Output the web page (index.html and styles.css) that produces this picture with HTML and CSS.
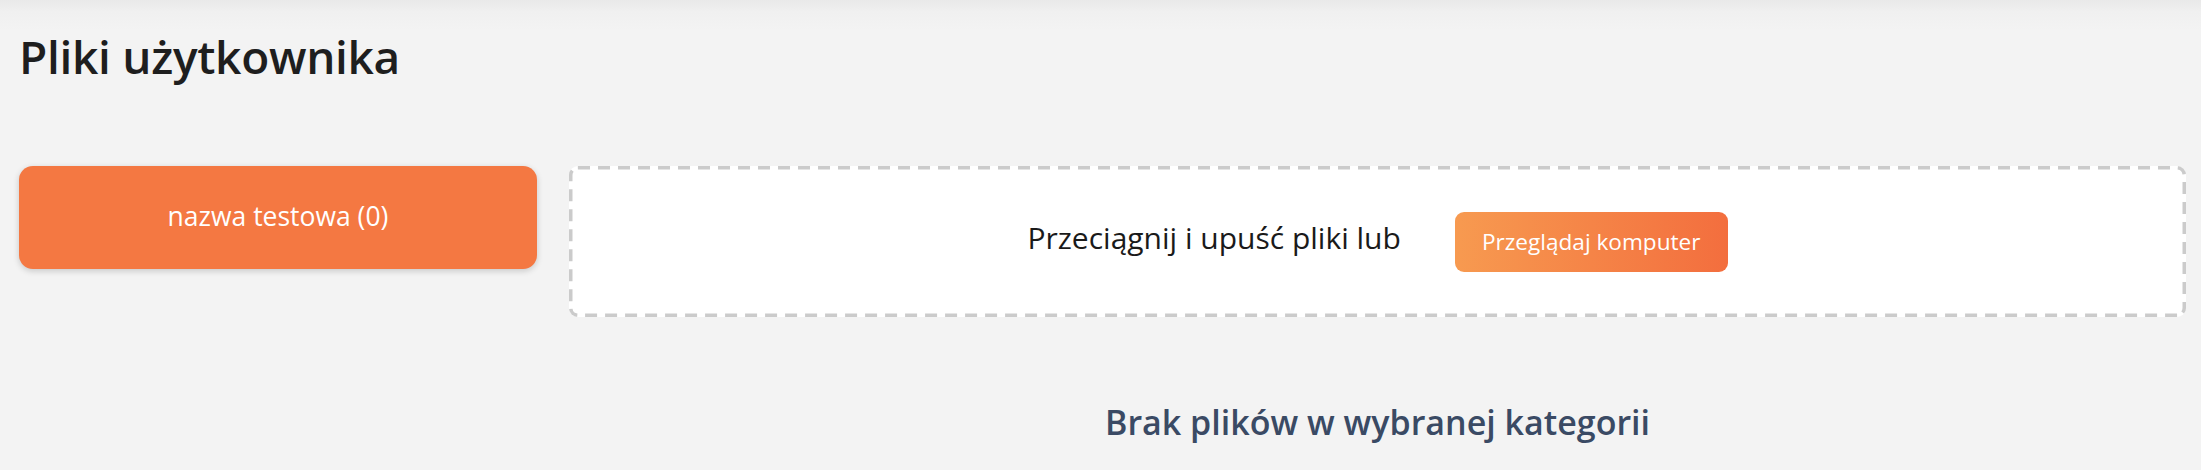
FILE: index.html
```html
<!DOCTYPE html>
<html lang="pl">
<head>
<meta charset="utf-8">
<title>Pliki użytkownika</title>
<link rel="stylesheet" href="styles.css">
</head>
<body>
<div class="topshade"></div>
<main class="page">
  <h1 class="title">Pliki użytkownika</h1>
  <div class="layout">
    <aside class="sidebar">
      <button class="category">nazwa testowa (0)</button>
    </aside>
    <section class="content">
      <div class="dropzone">
        <span class="drop-text">Przeciągnij i upuść pliki lub</span>
        <button class="browse">Przeglądaj komputer</button>
      </div>
      <p class="empty">Brak plików w wybranej kategorii</p>
    </section>
  </div>
</main>
</body>
</html>
```

FILE: styles.css
```css
html, body {
  margin: 0;
  padding: 0;
  background: #f3f3f3;
  height: 100%;
  overflow: hidden;
}
body {
  font-family: "Open Sans", "Noto Sans", sans-serif;
  color: #1f1f1f;
  position: relative;
}
.topshade {
  position: absolute;
  left: 0;
  top: 0;
  right: 0;
  height: 30px;
  background: linear-gradient(to bottom, #e9e9e9 0%, #f0f0f0 40%, #f3f3f3 100%);
}
.page {
  position: relative;
  padding: 0 15px 0 19px;
}
.title {
  margin: 0;
  padding-top: 26px;
  font-size: 46px;
  line-height: 60px;
  font-weight: 600;
  color: #1e1e1e;
  letter-spacing: -0.3px;
}
.layout {
  display: flex;
  gap: 32px;
  margin-top: 80px;
  align-items: flex-start;
}
.sidebar {
  width: 518px;
  flex: none;
}
.category {
  display: block;
  width: 100%;
  height: 103px;
  border: none;
  border-radius: 14px;
  background: #f47842;
  color: #ffffff;
  font-family: inherit;
  font-size: 26.5px;
  box-shadow: 0 2px 6px rgba(0,0,0,0.18);
  padding: 0 0 4px 0;
}
.content {
  flex: 1;
  min-width: 0;
}
.dropzone {
  height: 151px;
  box-sizing: border-box;
  border-radius: 9px;
  background-color: #ffffff;
  background-image: url("data:image/svg+xml,%3Csvg xmlns='http://www.w3.org/2000/svg' width='100%25' height='100%25'%3E%3Crect x='0' y='0' width='100%25' height='100%25' rx='9' ry='9' fill='none' stroke='%23cbcbcb' stroke-width='7' stroke-dasharray='12 8'/%3E%3C/svg%3E");
  display: flex;
  align-items: center;
  justify-content: center;
  gap: 54px;
}
.drop-text {
  font-size: 30px;
  color: #1a1a1a;
  margin-top: -8px;
}
.browse {
  height: 60px;
  padding: 0 27px;
  border: none;
  border-radius: 9px;
  background: linear-gradient(to right, #f79a50, #f36e3e);
  color: #ffffff;
  font-family: inherit;
  font-size: 22.6px;
}
.empty {
  margin: 82px 0 0 0;
  text-align: center;
  font-size: 34px;
  line-height: 46px;
  font-weight: 600;
  color: #3a4a64;
}
```
